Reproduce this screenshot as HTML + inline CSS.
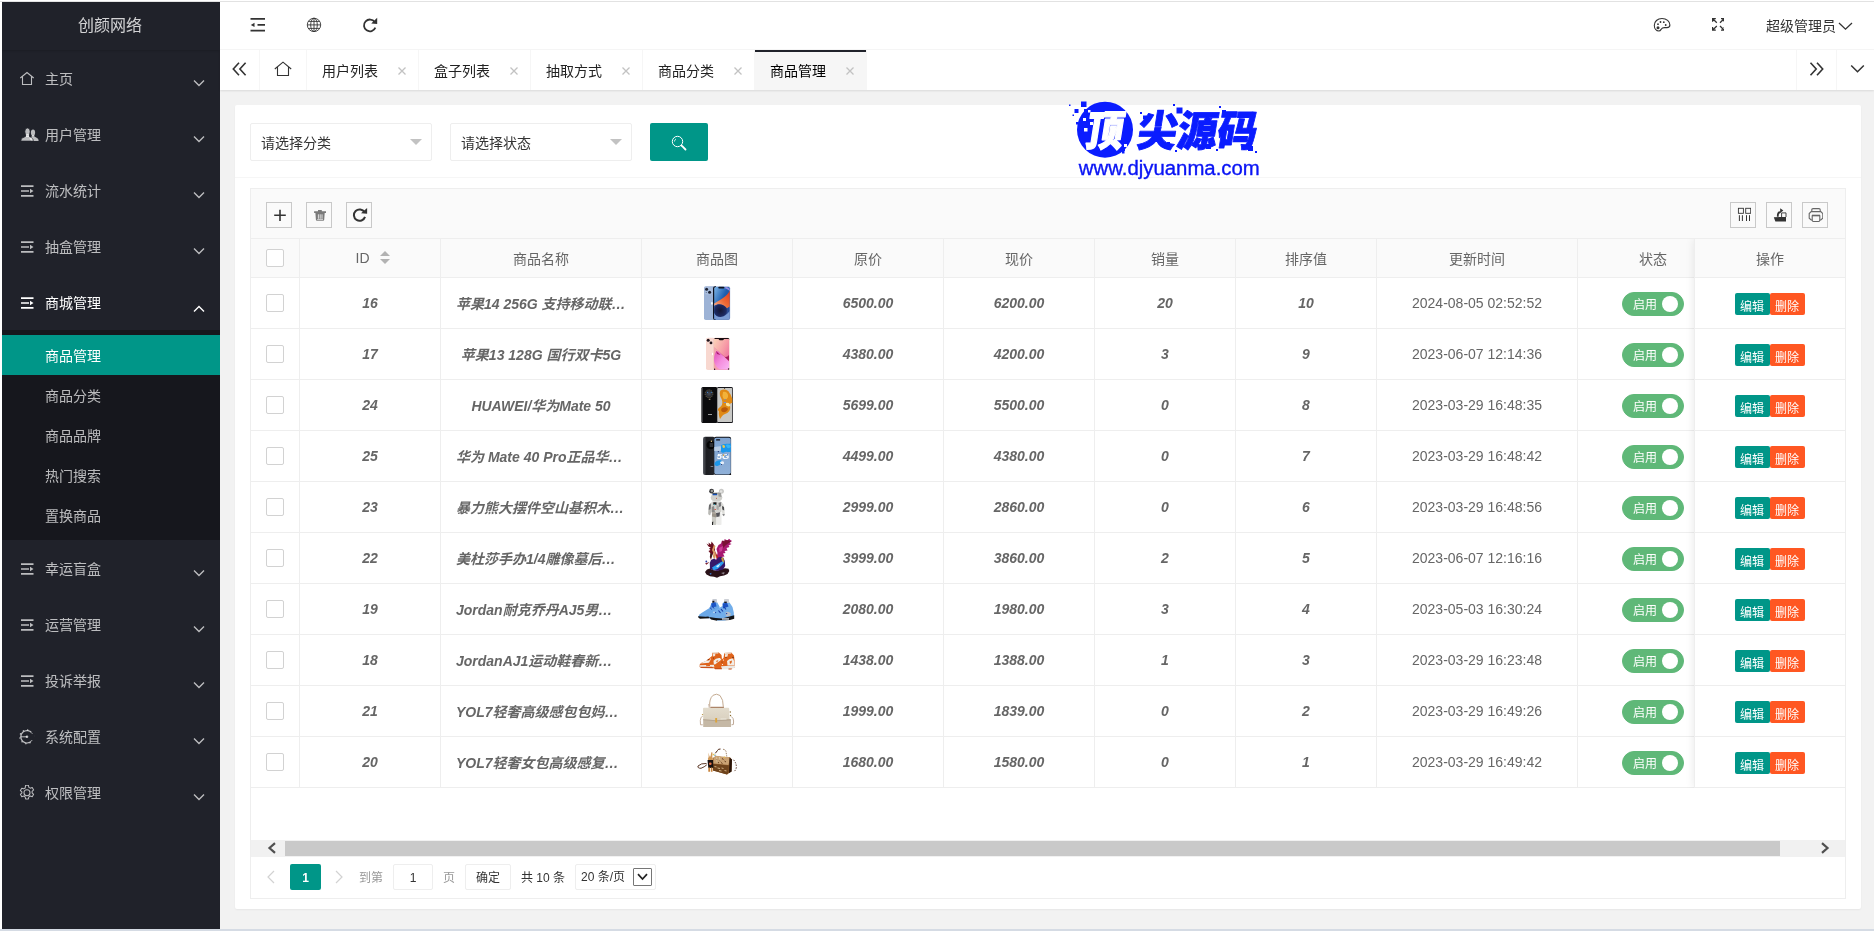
<!DOCTYPE html>
<html lang="zh-CN">
<head>
<meta charset="utf-8">
<title>商品管理</title>
<style>
*{box-sizing:border-box;margin:0;padding:0}
html,body{width:1874px;height:931px;overflow:hidden}
body{position:relative;background:#f2f2f2;font-family:"Liberation Sans","Noto Sans CJK SC",sans-serif;font-size:14px;color:#333;line-height:1}
.abs{position:absolute}
#wrap{position:absolute;left:0;top:0;width:1874px;height:931px;overflow:hidden;will-change:transform}
#side{position:absolute;left:0;top:0;width:220px;height:931px;background:#20222a}
#logo{position:absolute;left:0;top:0;width:220px;height:50px;line-height:52px;text-align:center;color:rgba(255,255,255,.8);font-size:16px;box-shadow:0 1px 2px rgba(0,0,0,.15)}
.mi{position:absolute;left:0;width:220px;height:56px;color:rgba(255,255,255,.7);font-size:14px}
.mi .t{position:absolute;left:45px;top:0;line-height:58px;white-space:nowrap}
.mi svg.ic{position:absolute;left:19px;top:21px;width:16px;height:16px}
.mi svg.ar{position:absolute;left:192px;top:28px;width:14px;height:10px}
#sub{position:absolute;left:0;top:330px;width:220px;height:210px;background:rgba(0,0,0,.3)}
.si{position:absolute;left:0;width:220px;height:40px;line-height:42px;padding-left:45px;color:rgba(255,255,255,.7);font-size:14px}
.si.on{background:#009688;color:#fff}
#hdr{position:absolute;left:220px;top:0;width:1654px;height:50px;background:#fff;border-bottom:1px solid #f6f6f6}
#tabs{position:absolute;left:220px;top:50px;width:1654px;height:40px;background:#fff;box-shadow:0 1px 2px 0 rgba(0,0,0,.1)}
.tab{position:absolute;top:0;height:40px;width:112px;border-right:1px solid #f6f6f6;line-height:42px;padding-left:15px;color:#222;font-size:14px;white-space:nowrap}
.tab .x{position:absolute;left:88px;top:13.500px;width:14px;height:14px}
.tab.on{background:#f6f6f6;color:#000}
.tab.on:before{content:"";position:absolute;left:0;top:0;width:100%;height:2px;background:#20222a}
.tctl{position:absolute;top:0;height:40px;width:40px}
#card{position:absolute;left:235px;top:105px;width:1626px;height:804px;background:#fff;border-radius:2px;box-shadow:0 1px 2px 0 rgba(0,0,0,.05)}
#chead{position:absolute;left:0;top:0;width:100%;height:73px;border-bottom:1px solid #f6f6f6}
.sel{position:absolute;top:18px;width:182px;height:38px;border:1px solid #eee;border-radius:2px;background:#fff;line-height:38px;padding-left:10px;color:#333;font-size:14px}
.sel:after{content:"";position:absolute;right:9px;top:15px;border:6px solid transparent;border-top-color:#c2c2c2;border-bottom-width:0}
#sbtn{position:absolute;left:415px;top:18px;width:58px;height:38px;background:#009688;border-radius:2px}
#tbox{position:absolute;left:15px;top:83px;width:1596px;height:711px;border:1px solid #eee;background:#fff;overflow:hidden}
#tool{position:absolute;left:0;top:0;width:1594px;height:50px;background:#fafafa;border-bottom:1px solid #eee}
.tb{position:absolute;top:13px;width:26px;height:26px;border:1px solid #c9c9c9;background:transparent}
.tb svg{position:absolute;left:5px;top:4px;width:16px;height:16px}
#thead{position:absolute;left:0;top:50px;width:1594px;height:39px;background:#fafafa;border-bottom:1px solid #eee}
.th{position:absolute;top:0;height:38px;line-height:40px;text-align:center;color:#666;font-size:14px;border-right:1px solid #eee}
.row{position:absolute;left:0;width:1594px;height:51px;border-bottom:1px solid #eee}
.td{position:absolute;top:0;height:50px;line-height:50px;text-align:center;color:#666;font-size:14px;font-weight:bold;font-style:italic;border-right:1px solid #eee;white-space:nowrap;overflow:hidden}
.td.n{font-weight:normal;font-style:normal}
.cb{position:absolute;left:15px;width:18px;height:18px;border:1px solid #d2d2d2;border-radius:2px;background:#fff}
.sw{position:absolute;left:1371px;top:14px;width:62px;height:24px;border-radius:12px;background:#5fb878;border:1px solid #5fb878}
.sw em{position:absolute;left:10px;top:0;line-height:24px;font-style:normal;font-weight:normal;font-size:12px;color:#fff}
.sw i{position:absolute;left:39px;top:3px;width:16px;height:16px;border-radius:50%;background:#fff}
#fix{position:absolute;left:1443px;top:50px;width:151px;height:549px;background:#fff;box-shadow:-1px 0 8px rgba(0,0,0,.08);border-left:1px solid #eee;clip-path:inset(0 0 0 -12px)}
.fh{position:absolute;left:0;top:0;width:150px;height:39px;line-height:40px;text-align:center;color:#666;background:#fafafa;border-bottom:1px solid #eee}
.fr{position:absolute;left:0;width:150px;height:51px;border-bottom:1px solid #eee}
.b1,.b2{position:absolute;top:15px;height:22px;width:35px;line-height:28px;overflow:hidden;font-size:12px;color:#fff;text-align:left;padding-left:5px;border-radius:2px}
.b1{left:40px;background:#009688}
.b2{left:75px;background:#ff5722}
#scr{position:absolute;left:0;top:651px;width:1594px;height:17px;background:#f1f1f1}
#scr .thumb{position:absolute;left:34px;top:1px;width:1495px;height:15px;background:#c9c9c9}
#page{position:absolute;left:0;top:668px;width:1594px;height:41px}
.pg{position:absolute;top:7px;height:26px;line-height:28px;font-size:12px;color:#333}
</style>
</head>
<body>
<div id="wrap">
<div id="side">
<div id="logo">创颜网络</div>
<div class="mi" style="top:50px"><svg class="ic" viewBox="0 0 16 16"><path d="M1.300 7 L8 1.500 L14.700 7 M3.500 5.400 V13.500 H12.500 V5.400" fill="none" stroke="currentColor" stroke-width="1.100"/></svg><span class="t">主页</span><svg class="ar" viewBox="0 0 14 10"><path d="M2 2.600 L7 7.500 L12 2.600" fill="none" stroke="currentColor" stroke-width="1.4"/></svg></div>
<div class="mi" style="top:106px"><svg class="ic" style="width:22px" viewBox="0 0 22 16"><g fill="currentColor"><ellipse cx="14" cy="5.600" rx="2.100" ry="3.200"/><path d="M12.800 8v1.300c0 .7-1.500 1-2.500 1.700l2 3.100h7.300c0-.8-.2-1.600-.6-2.300-.9-1.300-3.700-1.800-3.700-2.500V8z"/></g><g fill="currentColor" stroke="#20222a" stroke-width=".7"><path d="M6.900 7.500V9c0 .8-3.400 1.300-4.400 2.800-.5.800-.6 1.500-.6 2.300h12.400c0-.8-.1-1.500-.6-2.300-1-1.500-3.600-2-3.600-2.800V7.500z"/><ellipse cx="8.500" cy="4.700" rx="2.600" ry="3.700"/></g><path d="M7 7h3v3H7z" fill="currentColor"/></svg><span class="t">用户管理</span><svg class="ar" viewBox="0 0 14 10"><path d="M2 2.600 L7 7.500 L12 2.600" fill="none" stroke="currentColor" stroke-width="1.4"/></svg></div>
<div class="mi" style="top:162px"><svg class="ic" viewBox="0 0 16 16"><path d="M2 2.300h12.500v1.700H2zM2 7.200h8v1.600H2zM2 12h12.500v1.700H2zM11 5.800l3.500 2.200L11 10.200z" fill="currentColor"/></svg><span class="t">流水统计</span><svg class="ar" viewBox="0 0 14 10"><path d="M2 2.600 L7 7.500 L12 2.600" fill="none" stroke="currentColor" stroke-width="1.4"/></svg></div>
<div class="mi" style="top:218px"><svg class="ic" viewBox="0 0 16 16"><path d="M2 2.300h12.500v1.700H2zM2 7.200h8v1.600H2zM2 12h12.500v1.700H2zM11 5.800l3.500 2.200L11 10.200z" fill="currentColor"/></svg><span class="t">抽盒管理</span><svg class="ar" viewBox="0 0 14 10"><path d="M2 2.600 L7 7.500 L12 2.600" fill="none" stroke="currentColor" stroke-width="1.4"/></svg></div>
<div class="mi" style="top:274px;color:#fff"><svg class="ic" viewBox="0 0 16 16"><path d="M2 2.300h12.500v1.700H2zM2 7.200h8v1.600H2zM2 12h12.500v1.700H2zM11 5.800l3.500 2.200L11 10.200z" fill="currentColor"/></svg><span class="t">商城管理</span><svg class="ar" style="top:30px" viewBox="0 0 14 10"><path d="M2 7.500 L7 2.600 L12 7.500" fill="none" stroke="currentColor" stroke-width="1.4"/></svg></div>
<div class="mi" style="top:540px"><svg class="ic" viewBox="0 0 16 16"><path d="M2 2.300h12.500v1.700H2zM2 7.200h8v1.600H2zM2 12h12.500v1.700H2zM11 5.800l3.500 2.200L11 10.200z" fill="currentColor"/></svg><span class="t">幸运盲盒</span><svg class="ar" viewBox="0 0 14 10"><path d="M2 2.600 L7 7.500 L12 2.600" fill="none" stroke="currentColor" stroke-width="1.4"/></svg></div>
<div class="mi" style="top:596px"><svg class="ic" viewBox="0 0 16 16"><path d="M2 2.300h12.500v1.700H2zM2 7.200h8v1.600H2zM2 12h12.500v1.700H2zM11 5.800l3.500 2.200L11 10.200z" fill="currentColor"/></svg><span class="t">运营管理</span><svg class="ar" viewBox="0 0 14 10"><path d="M2 2.600 L7 7.500 L12 2.600" fill="none" stroke="currentColor" stroke-width="1.4"/></svg></div>
<div class="mi" style="top:652px"><svg class="ic" viewBox="0 0 16 16"><path d="M2 2.300h12.500v1.700H2zM2 7.200h8v1.600H2zM2 12h12.500v1.700H2zM11 5.800l3.500 2.200L11 10.200z" fill="currentColor"/></svg><span class="t">投诉举报</span><svg class="ar" viewBox="0 0 14 10"><path d="M2 2.600 L7 7.500 L12 2.600" fill="none" stroke="currentColor" stroke-width="1.4"/></svg></div>
<div class="mi" style="top:708px"><svg class="ic" viewBox="0 0 16 16"><path d="M13.300 4.600A6.200 6.200 0 1 0 13.300 11" fill="none" stroke="currentColor" stroke-width="1.200"/><circle cx="7.700" cy="7.800" r="6.900" fill="none" stroke="currentColor" stroke-width="1.200" stroke-dasharray="1.300 3.030" stroke-dashoffset="-2.300"/><path d="M12 2.300h3v11h-3z" fill="#20222a"/><path d="M13.300 4.600A6.200 6.200 0 0 0 12.200 3.400M13.300 11A6.200 6.200 0 0 1 12.200 12.200" fill="none" stroke="currentColor" stroke-width="1"/><circle cx="8" cy="7.800" r="1.300" fill="currentColor"/><path d="M1.800 7.800H8" stroke="currentColor" stroke-width="1"/></svg><span class="t">系统配置</span><svg class="ar" viewBox="0 0 14 10"><path d="M2 2.600 L7 7.500 L12 2.600" fill="none" stroke="currentColor" stroke-width="1.4"/></svg></div>
<div class="mi" style="top:764px"><svg class="ic" viewBox="0 0 16 16"><g transform="translate(8 7.800) scale(1.160) translate(-8 -8)"><circle cx="8" cy="8" r="2.600" fill="none" stroke="currentColor" stroke-width=".9"/><path d="M6.800 1.500h2.400l.4 1.800 1.200.7 1.700-.6 1.200 2.100-1.300 1.200v1.400l1.300 1.200-1.200 2.100-1.700-.6-1.200.7-.4 1.800H6.800l-.4-1.800-1.200-.7-1.700.6-1.200-2.100 1.300-1.200V7.300L2.300 6.100l1.200-2.100 1.700.6 1.200-.7z" fill="none" stroke="currentColor" stroke-width=".9" stroke-linejoin="round"/></g></svg><span class="t">权限管理</span><svg class="ar" viewBox="0 0 14 10"><path d="M2 2.600 L7 7.500 L12 2.600" fill="none" stroke="currentColor" stroke-width="1.4"/></svg></div>
<div id="sub">
<div class="si on" style="top:5px">商品管理</div>
<div class="si" style="top:45px">商品分类</div>
<div class="si" style="top:85px">商品品牌</div>
<div class="si" style="top:125px">热门搜索</div>
<div class="si" style="top:165px">置换商品</div>
</div>
</div>
<div id="hdr">
<svg class="abs" style="left:30px;top:17px;width:16px;height:16px" viewBox="0 0 16 16"><path d="M.5 1h14.500v1.800H.5zM7.500 7h7.500v1.800H7.500zM.5 12.800h14.500v1.800H.5zM4.500 5.700L.8 7.900l3.700 2.200z" fill="#333"/></svg>
<svg class="abs" style="left:86px;top:17px;width:16px;height:16px" viewBox="0 0 16 16"><g fill="none" stroke="#333" stroke-width=".9"><circle cx="8" cy="7.900" r="6.700"/><ellipse cx="8" cy="7.900" rx="3.300" ry="6.700"/><path d="M8 1.200v13.400M1.300 7.900h13.400M2.400 4.400h11.200M2.400 11.400h11.200"/></g></svg>
<svg class="abs" style="left:142px;top:17px;width:16px;height:16px" viewBox="0 0 16 16"><path d="M13.370 10.610A5.900 5.900 0 1 1 12.730 5.020" fill="none" stroke="#333" stroke-width="1.800"/><path d="M15.200 .8V7L9.200 6.400z" fill="#333"/></svg>
<svg class="abs" style="left:1433px;top:17px;width:18px;height:16px" viewBox="0 0 18 16"><path d="M9 1.500C4.500 1.500 1.300 4.600 1.300 8.300c0 3.200 2 5.700 4.600 5.700 1.400 0 1.800-.9 2.300-1.800.6-1.100 1.500-1.600 3.300-1.600h2.400c1.900 0 3-1 3-2.600C16.900 4.400 13.500 1.500 9 1.500z" fill="none" stroke="#333" stroke-width="1.100"/><circle cx="5" cy="10.700" r="1.500" fill="#333"/><circle cx="5" cy="7.200" r=".9" fill="#333"/><circle cx="7.500" cy="5" r=".9" fill="#333"/><circle cx="10.800" cy="5.200" r=".9" fill="#333"/><circle cx="12.700" cy="8" r=".9" fill="#333"/></svg>
<svg class="abs" style="left:1491.600px;top:18px;width:12.800px;height:12.800px" viewBox="0 0 12.800 12.800"><g fill="none" stroke="#333" stroke-width="1.250"><path d="M.6 3.800V.6H3.800M.8 .8l4 4M9 .6h3.200V3.800M12 .8l-4 4M.6 9V12.200H3.800M.8 12l4-4M12.200 9V12.200H9M12 12l-4-4"/></g></svg>
<div class="abs" style="left:1546px;top:0;line-height:52px;font-size:14px;color:#333;white-space:nowrap">超级管理员</div>
<svg class="abs" style="left:1618px;top:21px;width:15px;height:10px" viewBox="0 0 15 10"><path d="M1 2L7.500 8.200 14 2" fill="none" stroke="#333" stroke-width="1.300"/></svg>
</div>
<div id="tabs">
<div class="tctl" style="left:0;border-right:1px solid #f6f6f6"><svg class="abs" style="left:12px;top:12px;width:15px;height:14px" viewBox="0 0 15 14"><path d="M7 .8L1.300 7 7 13.200M13.600 .8L7.900 7l5.700 6.200" fill="none" stroke="#333" stroke-width="1.600"/></svg></div>
<div class="abs" style="left:40px;top:0;width:47px;height:40px;border-right:1px solid #f6f6f6"><svg class="abs" style="left:14px;top:11px;width:18px;height:16px" viewBox="0 0 18 16"><path d="M.8 8L9 1.200 17.200 8M3.500 6V14.500H14.500V6" fill="none" stroke="#333" stroke-width="1.100"/></svg></div>
<div class="tab" style="left:87px">用户列表<svg class="x" viewBox="0 0 14 14"><path d="M3.500 3.500l7 7M10.500 3.500l-7 7" stroke="#c2c2c2" stroke-width="1.300" fill="none"/></svg></div>
<div class="tab" style="left:199px">盒子列表<svg class="x" viewBox="0 0 14 14"><path d="M3.500 3.500l7 7M10.500 3.500l-7 7" stroke="#c2c2c2" stroke-width="1.300" fill="none"/></svg></div>
<div class="tab" style="left:311px">抽取方式<svg class="x" viewBox="0 0 14 14"><path d="M3.500 3.500l7 7M10.500 3.500l-7 7" stroke="#c2c2c2" stroke-width="1.300" fill="none"/></svg></div>
<div class="tab" style="left:423px">商品分类<svg class="x" viewBox="0 0 14 14"><path d="M3.500 3.500l7 7M10.500 3.500l-7 7" stroke="#c2c2c2" stroke-width="1.300" fill="none"/></svg></div>
<div class="tab on" style="left:535px">商品管理<svg class="x" viewBox="0 0 14 14"><path d="M3.500 3.500l7 7M10.500 3.500l-7 7" stroke="#c2c2c2" stroke-width="1.300" fill="none"/></svg></div>
<div class="tctl" style="left:1576px;border-left:1px solid #f6f6f6"><svg class="abs" style="left:12px;top:12px;width:15px;height:14px" viewBox="0 0 15 14"><path d="M1.500 .8L7.200 7l-5.700 6.200M8 .8L13.700 7 8 13.200" fill="none" stroke="#333" stroke-width="1.600"/></svg></div>
<div class="tctl" style="left:1616px;border-left:1px solid #f6f6f6"><svg class="abs" style="left:13px;top:14px;width:15px;height:10px" viewBox="0 0 15 10"><path d="M1.200 1.500L7.500 7.800 13.800 1.500" fill="none" stroke="#333" stroke-width="1.500"/></svg></div>
</div>
<div id="card">
<div id="chead">
<div class="sel" style="left:15px">请选择分类</div>
<div class="sel" style="left:215px">请选择状态</div>
<div id="sbtn"><svg class="abs" style="left:20px;top:11px;width:18px;height:18px" viewBox="0 0 18 18"><circle cx="7.500" cy="7.500" r="5.200" fill="none" stroke="#fff" stroke-width="1"/><path d="M11.700 11.700l3.800 3.800" stroke="#fff" stroke-width="1.800" stroke-linecap="round"/><path d="M4.500 7.500a3 3 0 0 1 1.500-2.600" fill="none" stroke="#fff" stroke-width=".8"/></svg></div>
</div>
<div id="tbox">
<div id="tool">
<div class="tb" style="left:15px"><svg viewBox="0 0 16 16"><path d="M8 2.700v11.200M2.200 8.300h11.600" stroke="#333" stroke-width="1.600"/></svg></div>
<div class="tb" style="left:55px"><svg viewBox="0 0 16 16"><path d="M2.100 4.200h11.900v1.700H2.100zM6 3.100h3.800v1.200H6zM3.400 6h9.300l-.5 6.800q-.1 1-1.100 1H5q-1 0-1.100-1z" fill="#7a7a7a"/><path d="M6.400 7.300v4.500M8.200 7.300v4.500M10 7.300v4.500" stroke="#fafafa" stroke-width=".8"/><path d="M5.200 12.600h5.800" stroke="#fafafa" stroke-width=".7"/></svg></div>
<div class="tb" style="left:95px"><svg viewBox="0 0 16 16"><path d="M13.020 9.860A5.700 5.700 0 1 1 12.540 5.250" fill="none" stroke="#333" stroke-width="2"/><path d="M15.100 1V6.800L9 6.300z" fill="#333"/></svg></div>
<div class="tb" style="left:1479px"><svg style="left:4px" viewBox="0 0 16 16"><g fill="none" stroke="#333"><rect x="3.400" y="1.300" width="5" height="5" stroke-width=".9"/><rect x="10.700" y="1.300" width="5" height="5" stroke-width=".9"/><path d="M4.400 8.200v5.800M7.400 8.200v5.800M11.500 8.200v5.800M14.500 8.200v5.800" stroke-width="1"/></g></svg></div>
<div class="tb" style="left:1515px"><svg style="left:4px" viewBox="0 0 16 16"><path d="M2.800 10.200L15 9.900V14.400H4.400z" fill="#333"/><path d="M10.600 10V5.900H15V10" fill="none" stroke="#333" stroke-width=".9"/><path d="M5.900 9.700C5.700 6.200 7 4.100 9.600 3.900V5.900C8.200 6.100 7.600 7.200 7.700 9.700z" fill="#333"/><path d="M9.200 1.200L12.300 3.500 9.200 5.900z" fill="#333"/></svg></div>
<div class="tb" style="left:1551px"><svg style="left:4px" viewBox="0 0 16 16"><g fill="none" stroke="#666" stroke-width="1.100"><path d="M4.800 4.600V2.800q0-1.200 1.200-1.200h6q1.200 0 1.200 1.200v1.800"/><path d="M4.200 4.600h9.600l2 2v4.600l-2 1.800H4.200l-2-1.800V6.600z"/><path d="M5.200 8.700h7.600v4.600q0 1.200-1.200 1.200H6.400q-1.200 0-1.200-1.200z" fill="#fafafa"/><path d="M5 8.400h8" stroke-width="1.400"/></g></svg></div>
</div>
<div id="thead">
<div class="th" style="left:0px;width:49px"><span class="cb" style="top:10px"></span></div>
<div class="th" style="left:49px;width:141px"><span style="position:absolute;left:55.500px;top:-1px">ID</span><span class="abs" style="left:80px;top:12px;border:5px solid transparent;border-top-width:0;border-bottom-color:#b2b2b2"></span><span class="abs" style="left:80px;top:20px;border:5px solid transparent;border-bottom-width:0;border-top-color:#b2b2b2"></span></div>
<div class="th" style="left:190px;width:201px">商品名称</div>
<div class="th" style="left:391px;width:151px">商品图</div>
<div class="th" style="left:542px;width:151px">原价</div>
<div class="th" style="left:693px;width:151px">现价</div>
<div class="th" style="left:844px;width:141px">销量</div>
<div class="th" style="left:985px;width:141px">排序值</div>
<div class="th" style="left:1126px;width:201px">更新时间</div>
<div class="th" style="left:1327px;width:151px">状态</div>
</div>
<div class="row" style="top:89px">
<div class="td" style="left:0;width:49px"><span class="cb" style="top:16px"></span></div><div class="td" style="left:49px;width:141px">16</div><div class="td" style="left:190px;width:201px;text-align:left;padding-left:15px;line-height:52px">苹果14 256G 支持移动联…</div><div class="td" style="left:391px;width:151px"><svg class="abs" style="left:0;top:0;width:151px;height:51px" viewBox="642 278 151 51"><defs><linearGradient id="a0" x1="0" y1="0" x2="1" y2="1"><stop offset="0" stop-color="#7fb6e8"/><stop offset=".45" stop-color="#1d5fb0"/><stop offset="1" stop-color="#2a3f86"/></linearGradient><linearGradient id="b0" x1="0" y1="1" x2="1" y2="0"><stop offset="0" stop-color="#f6b59a"/><stop offset=".5" stop-color="#ee6a35"/><stop offset="1" stop-color="#e23a1c"/></linearGradient><radialGradient id="c0" cx=".45" cy=".45" r=".6"><stop offset="0" stop-color="#141634"/><stop offset=".7" stop-color="#1d2a62"/><stop offset="1" stop-color="#3b62b4"/></radialGradient></defs><rect x="704" y="286.200" width="11" height="33.800" rx="1.800" fill="#9db3d6"/><rect x="704.600" y="287" width="8" height="7.600" rx="2" fill="#a9bddd"/><circle cx="706.600" cy="289.200" r="1.500" fill="#1a2030"/><circle cx="709.600" cy="292.200" r="1.500" fill="#1a2030"/><circle cx="706.300" cy="292.500" r=".6" fill="#5a6884"/><ellipse cx="711.900" cy="303.300" rx=".9" ry="1.500" fill="#f4f6fa"/><rect x="713" y="286.300" width="17.200" height="33.800" rx="2" fill="#a9bcdc"/><path d="M715 286.300 Q713 286.300 713 288.300 V318.100 Q713 320.100 715 320.100 H716 V286.300z" fill="#0e1220"/><rect x="714.200" y="287" width="15.500" height="32.600" rx="1.500" fill="url(#a0)"/><path d="M729.700 290.500 C727.500 296 722 298.500 714.200 303.500 V306 C718 303.500 723 304 726.500 308.500 L729.700 306.500z" fill="url(#b0)"/><path d="M714.200 306 C718 303 724.500 304 727.500 309 C729 313 727 317 722 318.200 C718 318.500 715 316 714.200 313z" fill="url(#c0)"/><path d="M714.200 313 C716 317.500 722 319 727.500 313.500 L729.700 311 V318.500 Q729.700 319.600 728.500 319.600 H715.500 Q714.200 319.600 714.200 318.500z" fill="#7a9bd4"/><path d="M726 287 C729 287.500 729.700 289 729.700 291 C728 289.500 726.500 288.500 724 288z" fill="#9a8ee6"/><rect x="718.300" y="286.800" width="6" height="1.700" rx=".8" fill="#0e1220"/></svg></div><div class="td" style="left:542px;width:151px">6500.00</div><div class="td" style="left:693px;width:151px">6200.00</div><div class="td" style="left:844px;width:141px">20</div><div class="td" style="left:985px;width:141px">10</div><div class="td n" style="left:1126px;width:201px">2024-08-05 02:52:52</div><div class="td" style="left:1327px;width:151px"></div><div class="sw"><em>启用</em><i></i></div>
</div>
<div class="row" style="top:140px">
<div class="td" style="left:0;width:49px"><span class="cb" style="top:16px"></span></div><div class="td" style="left:49px;width:141px">17</div><div class="td" style="left:190px;width:201px;line-height:52px">苹果13 128G 国行双卡5G</div><div class="td" style="left:391px;width:151px"><svg class="abs" style="left:0;top:0;width:151px;height:51px" viewBox="642 329 151 51"><defs><linearGradient id="a1" x1="0" y1="0" x2="1" y2="1"><stop offset="0" stop-color="#fbd3b8"/><stop offset=".5" stop-color="#f79aa6"/><stop offset="1" stop-color="#e4559a"/></linearGradient><linearGradient id="b1" x1="0" y1="0" x2="1" y2="1"><stop offset="0" stop-color="#e04fb4"/><stop offset=".5" stop-color="#f58ede"/><stop offset="1" stop-color="#f9b8f4"/></linearGradient></defs><rect x="706" y="337.800" width="9" height="32.200" rx="1.800" fill="#f8d8d0"/><circle cx="708.200" cy="340.300" r="1.500" fill="#20141a"/><circle cx="711" cy="342.900" r="1.400" fill="#20141a"/><ellipse cx="712.600" cy="354" rx=".7" ry="1.200" fill="#fff"/><rect x="713.300" y="337.800" width="16.200" height="32.300" rx="2" fill="#f2c3bd"/><rect x="714" y="338.600" width="15" height="31" rx="1.500" fill="url(#a1)"/><path d="M714 347 L729 361 V355 C727 358 724 357 722 355 L714 347z" fill="#a51a5c"/><path d="M714 347 L722 354.500 C719 352 716 352.500 714 355z" fill="#f4a6b0"/><path d="M716 351.500 C714.500 354 714 357 714 360 V368.500 Q714 369.600 715.200 369.600 H727.800 Q729 369.600 729 368.500 V361.500 L719.500 352.500 C718.500 351.300 717 350.800 716 351.500z" fill="url(#b1)"/><path d="M716 351 L720.500 355 L717 354z" fill="#a8186a"/><path d="M714 361 C715 366 718 369 721 369.600 H715.200 Q714 369.600 714 368.500z" fill="#f3a0aa"/><path d="M714.800 337.900 H728 Q729.500 338.200 729.400 339.600 L728.600 339 H724 Q723.500 340.200 722.500 340.200 H720 Q719 340.200 718.600 339 H714.400z" fill="#1a0e12"/><circle cx="714.600" cy="369.300" r=".7" fill="#1a0e12"/><circle cx="728.600" cy="369" r=".8" fill="#3a1420"/></svg></div><div class="td" style="left:542px;width:151px">4380.00</div><div class="td" style="left:693px;width:151px">4200.00</div><div class="td" style="left:844px;width:141px">3</div><div class="td" style="left:985px;width:141px">9</div><div class="td n" style="left:1126px;width:201px">2023-06-07 12:14:36</div><div class="td" style="left:1327px;width:151px"></div><div class="sw"><em>启用</em><i></i></div>
</div>
<div class="row" style="top:191px">
<div class="td" style="left:0;width:49px"><span class="cb" style="top:16px"></span></div><div class="td" style="left:49px;width:141px">24</div><div class="td" style="left:190px;width:201px;line-height:52px">HUAWEI/华为Mate 50</div><div class="td" style="left:391px;width:151px"><svg class="abs" style="left:0;top:0;width:151px;height:51px" viewBox="642 380 151 51"><defs><radialGradient id="a2" cx=".5" cy=".5" r=".5"><stop offset="0" stop-color="#4a4e58"/><stop offset=".7" stop-color="#2a2c32"/><stop offset="1" stop-color="#1a1b1f"/></radialGradient></defs><rect x="701.400" y="386.900" width="16" height="36" rx="1.500" fill="#0b0b0d"/><rect x="702" y="388" width="1" height="34" fill="#3a3a3e"/><circle cx="709" cy="393.800" r="4.200" fill="url(#a2)"/><circle cx="709" cy="393.800" r="3.900" fill="none" stroke="#a08a5a" stroke-width=".8" stroke-dasharray=".8 1.400"/><circle cx="707.600" cy="392.300" r=".6" fill="#3a86d8"/><circle cx="711.300" cy="392.300" r=".6" fill="#3a86d8"/><rect x="708.800" y="398.800" width="1.600" height=".9" fill="#c8b896"/><rect x="708" y="414" width="4" height="1" fill="#9a9a9a"/><rect x="716.800" y="386.900" width="16.200" height="36" rx="1.500" fill="#15151a"/><rect x="717.300" y="388" width="15" height="34" rx=".8" fill="#c9c9c6"/><path d="M720.500 390.500 C724 388.500 728.500 390 729.500 393 C731.500 395 731 397 732.300 398.500 V403 C730.500 402.500 729.500 404 730 406 C731 410 728.500 413 725 414 C722 415 721 418 720 419 C719 416 718.500 414 719 411.500 C717.500 410.500 717.500 408.500 719.500 407.500 C722 406 722.500 404 722.300 401.500 C722 398.500 720.500 398 720 395.500 C719.600 393.500 719.800 391.500 720.500 390.500z" fill="#e08a16"/><path d="M723 392 C725.500 391 727.500 392.500 728 395 C728.500 397.500 727 399 725.500 399.500 C723.500 399.500 722.500 397.500 722.500 395.500z" fill="#f2b23a"/><path d="M722 408 C724 406.500 727 407 728 409 C727.500 411.500 725 412.500 722.500 412 C720.800 411.500 720.800 409 722 408z" fill="#b85a0c"/><rect x="723.800" y="402" width="2.200" height="1" fill="#6a8fe0"/><circle cx="725.200" cy="399.500" r=".6" fill="#5a7fd8"/><path d="M726 403 C728.500 402 730.500 404 730 406 C728.500 407 726.500 406 726 405z" fill="#f6e2a0"/><circle cx="724.600" cy="388.300" r=".5" fill="#111"/></svg></div><div class="td" style="left:542px;width:151px">5699.00</div><div class="td" style="left:693px;width:151px">5500.00</div><div class="td" style="left:844px;width:141px">0</div><div class="td" style="left:985px;width:141px">8</div><div class="td n" style="left:1126px;width:201px">2023-03-29 16:48:35</div><div class="td" style="left:1327px;width:151px"></div><div class="sw"><em>启用</em><i></i></div>
</div>
<div class="row" style="top:242px">
<div class="td" style="left:0;width:49px"><span class="cb" style="top:16px"></span></div><div class="td" style="left:49px;width:141px">25</div><div class="td" style="left:190px;width:201px;text-align:left;padding-left:15px;line-height:52px">华为 Mate 40 Pro正品华…</div><div class="td" style="left:391px;width:151px"><svg class="abs" style="left:0;top:0;width:151px;height:51px" viewBox="642 431 151 51"><defs><linearGradient id="a3" x1="0" y1="0" x2="1" y2="0"><stop offset="0" stop-color="#5a5d64"/><stop offset=".3" stop-color="#1c1d21"/><stop offset="1" stop-color="#26272c"/></linearGradient><linearGradient id="b3" x1="0" y1="0" x2="0" y2="1"><stop offset="0" stop-color="#7fa4d2"/><stop offset="1" stop-color="#8fb0d8"/></linearGradient></defs><rect x="703" y="436.800" width="12" height="38.200" rx="2" fill="url(#a3)"/><circle cx="710.800" cy="445" r="4.300" fill="#050506"/><rect x="709.600" y="443" width="3.600" height="4" rx=".6" fill="#2e3036"/><circle cx="711.400" cy="441.300" r=".7" fill="#e9c98a"/><rect x="710.600" y="466" width="2.600" height=".9" fill="#8a8c92"/><rect x="714" y="436.800" width="17.100" height="38.200" rx="2" fill="#0f1014"/><rect x="714.300" y="437.800" width="16.500" height="36.600" rx="1.800" fill="url(#b3)"/><path d="M714.300 447 L722 446 L721 451 L714.300 451z" fill="#b9cde6"/><path d="M721 445.500 C723 443.500 727 444 730.800 443.500 V452 C728 452.500 726 451 724 452.500 C722 453.500 720.500 452 720.800 450 C721.500 448 720.500 447 721 445.500z" fill="#1c97ea"/><path d="M722.500 445 C724.500 444.500 725.500 446 724.800 447.500 C723.500 448.500 722 447.500 722.500 445z" fill="#f0c64a"/><path d="M726 445 C728.500 444 730.800 445 730.800 447 C729 449 726.500 448.500 726 445z" fill="#35b4f6"/><path d="M714.500 463.500 C715.500 460.500 719 460 721.500 460.500 C722 463 720.500 465 718 465.800 C716 466.500 714.500 465.500 714.500 463.500z" fill="#1c97ea"/><path d="M720 462 C722.500 460.500 724.500 461.500 724 463.500 C722.500 465 720.500 464.500 720 462z" fill="#e8eef8"/><circle cx="718.300" cy="451.600" r=".6" fill="#1a2c6a"/><circle cx="721.600" cy="464.500" r=".6" fill="#1a2c6a"/><rect x="717" y="453" width="12" height="6" fill="#fff" opacity=".0"/><text x="716.800" y="458.800" font-family="'Liberation Sans',sans-serif" font-size="7.500" font-weight="700" font-style="italic" fill="#fff" textLength="12.500" lengthAdjust="spacingAndGlyphs">5G</text><circle cx="723.600" cy="455.300" r=".8" fill="#e8a01c"/><circle cx="727.600" cy="454.600" r=".6" fill="#2a7ae0"/><rect x="716" y="439.300" width="4.200" height="1.300" rx=".65" fill="#0a0a10"/><circle cx="730.400" cy="474.300" r=".8" fill="#050508"/></svg></div><div class="td" style="left:542px;width:151px">4499.00</div><div class="td" style="left:693px;width:151px">4380.00</div><div class="td" style="left:844px;width:141px">0</div><div class="td" style="left:985px;width:141px">7</div><div class="td n" style="left:1126px;width:201px">2023-03-29 16:48:42</div><div class="td" style="left:1327px;width:151px"></div><div class="sw"><em>启用</em><i></i></div>
</div>
<div class="row" style="top:293px">
<div class="td" style="left:0;width:49px"><span class="cb" style="top:16px"></span></div><div class="td" style="left:49px;width:141px">23</div><div class="td" style="left:190px;width:201px;text-align:left;padding-left:15px;line-height:52px">暴力熊大摆件空山基积木…</div><div class="td" style="left:391px;width:151px"><svg class="abs" style="left:0;top:0;width:151px;height:51px" viewBox="642 482 151 51"><circle cx="711.600" cy="491.200" r="2.400" fill="#3c3c3e"/><circle cx="711.900" cy="491" r="1.200" fill="#9a9c9a"/><circle cx="721.400" cy="491.200" r="2.500" fill="#c9c9c7"/><circle cx="721" cy="491.400" r="1.200" fill="#e4e4e2"/><path d="M712.300 493.300 Q716.500 490.600 720.700 493.300 L722.300 497.500 Q722.300 501.400 716.500 501.400 Q710.700 501.400 710.700 497.500z" fill="#cfcfcb"/><path d="M718 492.500 L721 493 L721.500 497 L718.500 496.500z" fill="#9a9a98"/><rect x="712.600" y="493.600" width="4.600" height="1.700" rx=".5" fill="#1650b8"/><rect x="712.200" y="493.300" width="5.200" height=".6" fill="#222"/><circle cx="716.500" cy="498.200" r=".5" fill="#b04a30"/><rect x="711.600" y="501.600" width="9.800" height="11" rx="1.200" fill="#d2d2ce"/><path d="M711.600 507 L714 506 L715 512.600 H711.600z" fill="#8a8a88"/><path d="M716.500 505 L719 506 L718.500 510 L716.500 509.500z" fill="#a8a8a6"/><rect x="713.300" y="502.300" width="3.200" height="2.400" fill="#1b1b1d"/><circle cx="714.400" cy="504.600" r=".6" fill="#2ab0c8"/><rect x="714.600" y="509" width="1.300" height=".8" fill="#d83a2a"/><path d="M718.500 503 L721.400 502 V506 L719 507z" fill="#77777a"/><path d="M711.400 502.600 Q709 503.500 708.500 508 L708.200 513.500 Q708.600 515.600 710.300 515 L711.600 510z" fill="#b9b9b5"/><path d="M709 505 L711 504 L710.500 509 L708.800 510z" fill="#6a6a6c"/><path d="M721.400 502.600 Q723.800 503.500 724.200 508 L724.800 514 Q724.300 516.200 722.700 515.300 L721.600 510z" fill="#dededa"/><path d="M722 506 L724 507 L724.200 510.500 L722.300 509.500z" fill="#4a4a4c"/><path d="M722.300 514 L724.800 514 L724 516.300 L723 515.400z" fill="#88888a"/><rect x="711.900" y="512" width="4.500" height="13" rx=".8" fill="#cacac4"/><path d="M712 513.500 L716.400 513.500 L716.400 517.500 L712 516.500z" fill="#9a948a"/><rect x="717" y="512" width="4.500" height="13" rx=".8" fill="#ececea"/><path d="M716 513 L720 512.200 L719.500 516.500 L716.500 517z" fill="#55555a"/><rect x="712" y="512.400" width="3.600" height="1" fill="#9a8f84"/><path d="M712 522 L713.300 521.500 L713 525 L712 525z" fill="#222"/></svg></div><div class="td" style="left:542px;width:151px">2999.00</div><div class="td" style="left:693px;width:151px">2860.00</div><div class="td" style="left:844px;width:141px">0</div><div class="td" style="left:985px;width:141px">6</div><div class="td n" style="left:1126px;width:201px">2023-03-29 16:48:56</div><div class="td" style="left:1327px;width:151px"></div><div class="sw"><em>启用</em><i></i></div>
</div>
<div class="row" style="top:344px">
<div class="td" style="left:0;width:49px"><span class="cb" style="top:16px"></span></div><div class="td" style="left:49px;width:141px">22</div><div class="td" style="left:190px;width:201px;text-align:left;padding-left:15px;line-height:52px">美杜莎手办1/4雕像墓后…</div><div class="td" style="left:391px;width:151px"><svg class="abs" style="left:0;top:0;width:151px;height:51px" viewBox="642 533 151 51"><path d="M706.500 543.500 L709 545 L708.500 542.500 L711 544.500 L711.500 541.500 L713.500 544 L714.500 546 L715 550 L713.500 553 L712 556 L711 560 L709.800 557 L710.500 553.500 L708.500 551 L710.500 550 L709 548.500 L710.800 547.500 L708.500 546.500z" fill="#6a0f20"/><path d="M716 560.500 L717.500 553 L716.500 549 L718.500 545 L721 543.500 L722 540.500 L724.500 541.500 L724.500 539 L727.500 540.500 L729 538.800 L730.500 540 L732 541 L729.500 543 L731.500 544 L728.500 545.500 L729.500 547 L726.500 548 L727.500 550.500 L724.500 551 L725.500 553 L723 553.500 L724.500 556.500 L721.500 557 L720.500 560z" fill="#a81870"/><path d="M722 541 L728 540 L731 541.500 L726 545 L723 548z" fill="#6a0f20" opacity=".75"/><path d="M719 548 L723 546 L722 551 L719.500 552z" fill="#d44aa0" opacity=".8"/><path d="M713.800 545 L715.500 546 L714 550 L716 555 L715 559 L712.800 557 L713.500 553 L712 550z" fill="#d89a60"/><path d="M714.500 550 L717 555 L719 559 L716.500 558z" fill="#b02818"/><path d="M710.500 553 L712 554 L711.500 557.500 L710.300 557z" fill="#2a2420"/><path d="M705 563.500 L709.500 562 L706.500 564.800z" fill="#7a1a28"/><circle cx="706.300" cy="561.500" r=".9" fill="#2a3aa0"/><path d="M705 572 L707 569.500 L710 568.500 L713 570 L717 571 L721 569 L725 568.200 L728.500 568.800 L729.300 571 L727.500 574 L724 575.500 L720 576.300 L717 577.800 L714 576.800 L710 576.300 L706.500 574.500z" fill="#2a1218"/><path d="M710 569 L709.800 563 L711 560 L714 558.500 L716.500 560 L718 557.500 L721 556.800 L723.500 558 L724.800 561 L725.200 566 L723 569.500 L717 571 L713 570z" fill="#36186a"/><path d="M721.200 558 L723.200 557.200 L724.200 562 L722.600 563.500z" fill="#c9963a"/><path d="M712 567.500 L716 565 L720 562.500 L723 561.200 L723.800 563 L721 566 L717.500 569 L713.500 570.300z" fill="#2a9cf0"/><path d="M716 566.300 L720.500 563.500 L718 567.500z" fill="#d8f2ff"/><path d="M709.500 573.500 L711.500 572.800 L711 575z" fill="#3a7ad0"/><path d="M721 573 L724.500 572 L724 574.500z" fill="#8a8088"/></svg></div><div class="td" style="left:542px;width:151px">3999.00</div><div class="td" style="left:693px;width:151px">3860.00</div><div class="td" style="left:844px;width:141px">2</div><div class="td" style="left:985px;width:141px">5</div><div class="td n" style="left:1126px;width:201px">2023-06-07 12:16:16</div><div class="td" style="left:1327px;width:151px"></div><div class="sw"><em>启用</em><i></i></div>
</div>
<div class="row" style="top:395px">
<div class="td" style="left:0;width:49px"><span class="cb" style="top:16px"></span></div><div class="td" style="left:49px;width:141px">19</div><div class="td" style="left:190px;width:201px;text-align:left;padding-left:15px;line-height:52px">Jordan耐克乔丹AJ5男…</div><div class="td" style="left:391px;width:151px"><svg class="abs" style="left:0;top:0;width:151px;height:51px" viewBox="642 584 151 51"><path d="M698.500 616.500 Q698.800 614 701.500 613 L709.500 608 L711.500 603 Q713.500 601.500 717 602 L719.500 606.500 L719.800 612.500 L718.500 617.500 L708 618.200 L699 617.800z" fill="#6aa8e8"/><rect x="712.300" y="599" width="4.600" height="4" rx=".8" fill="#c6cad2"/><rect x="712.400" y="600.800" width="2" height="2" fill="#15161a"/><path d="M711.300 603.500 L715.500 602 L716.500 606.500 L711.500 607.500z" fill="#1c56c6"/><path d="M710.200 607.500 L711.500 609.500 M712.500 606.500 L714 608.500" stroke="#1a3fa8" stroke-width="1"/><path d="M709 617.500 Q710.500 612 716.500 609.500 L722.500 606 L723 602.500 Q726 601.500 729.500 602.500 L732.500 607 L733.800 612.500 L734 618 L722 619.500 L710 618.800z" fill="#72aeea"/><rect x="724" y="599" width="5" height="4" rx=".8" fill="#cdd0d6"/><rect x="724.200" y="601.600" width="2.600" height="1.400" fill="#1a1c22"/><path d="M722.600 603.500 L727 602.800 L728.500 606.500 L723 608.500z" fill="#1a50c0"/><path d="M721 609 L723 611.500 M718.500 610.500 L720.500 613 M724 607 L726 609.500" stroke="#173aa6" stroke-width="1.100"/><circle cx="714" cy="612.300" r=".7" fill="#e8eef6"/><circle cx="715.600" cy="612.600" r=".6" fill="#1a3aa0"/><path d="M725.500 612.500 Q728.500 610.500 731 613.500 L730 616.500 L726 616z" fill="#b8bec8"/><circle cx="726.600" cy="613.600" r=".7" fill="#1a3aa0"/><path d="M698 616.300 Q703 616.800 708.500 616.600 L709.500 618.200 L700 618.800 Q698 618.200 698 616.300z" fill="#121214"/><path d="M709 617 Q716 618.300 722 618.600 L734.200 615.300 L734.200 618.800 L730 620 L717 620.800 L711 619.600z" fill="#141416"/><rect x="722" y="618.300" width="7" height="1.300" fill="#dfe6ee"/><rect x="717" y="620" width="8.500" height=".8" fill="#9ec4ea"/></svg></div><div class="td" style="left:542px;width:151px">2080.00</div><div class="td" style="left:693px;width:151px">1980.00</div><div class="td" style="left:844px;width:141px">3</div><div class="td" style="left:985px;width:141px">4</div><div class="td n" style="left:1126px;width:201px">2023-05-03 16:30:24</div><div class="td" style="left:1327px;width:151px"></div><div class="sw"><em>启用</em><i></i></div>
</div>
<div class="row" style="top:446px">
<div class="td" style="left:0;width:49px"><span class="cb" style="top:16px"></span></div><div class="td" style="left:49px;width:141px">18</div><div class="td" style="left:190px;width:201px;text-align:left;padding-left:15px;line-height:52px">JordanAJ1运动鞋春新…</div><div class="td" style="left:391px;width:151px"><svg class="abs" style="left:0;top:0;width:151px;height:51px" viewBox="642 635 151 51"><path d="M699.300 666.500 Q699.300 664 701 663 L706 661 L709 658.500 L712 656 L712.300 652.800 L718.500 652.300 L721.500 655 L722 660 L722.500 666 L714 667.800 L700 667z" fill="#de621a"/><path d="M712.600 652.300 H718.500 L718.300 653.600 H712.600z" fill="#efece6"/><path d="M700.500 663.600 L709 662.800 L710.500 660 L705.500 661z" fill="#f1eee8"/><path d="M712.800 653.800 L715.500 653.600 L715 656 L712.800 656.500z" fill="#efe6dc"/><path d="M713.500 660.800 Q716 657.500 720 658 L721.800 660.500 L722 663.800 L713.800 664.300z" fill="#f1eee8"/><path d="M716 661 L718.500 660 L717 662.500z" fill="#de621a"/><path d="M699.300 665.200 L722 664.500 L722.300 666.500 L699.600 667.500z" fill="#f1eee8"/><path d="M699.500 666.800 H712 L714 668.200 L701 668z" fill="#c8501a"/><path d="M706 665.300 L710 664.800 L710 666 L706 666.300z M714 665 L718 664.800 L718 666.300 L714 666.300z" fill="#de621a"/><path d="M714 667.500 Q715 663.500 719 661.500 L723.500 658 L724.300 653 L731 652.300 L734 655.500 L734.600 661 L735 667.500 L728 669 L715 668.500z" fill="#e0641c"/><path d="M724.600 652.600 L731 652.200 L731.300 653.600 L724.600 653.900z" fill="#efece6"/><path d="M727 661 Q729.500 657.800 733 658.600 L734.300 661.500 L734.600 665.200 L727.500 665.500z" fill="#f1eee8"/><path d="M725 654.300 L728 654 L727.500 656.500 L725 657z" fill="#efe6dc"/><path d="M729.500 661.500 L732 660.500 L731.500 663 L730 664z" fill="#de621a"/><path d="M721 666.200 L735 665.500 L735.200 667.600 L731 669.200 L722 669.300z" fill="#ebe8e4"/><path d="M714 668 H721.500 L722 669.300 L715 669.200z M728.500 668.600 H732 L731.500 669.600 H728.500z" fill="#c8501a"/><circle cx="708.300" cy="659.600" r=".7" fill="#7a2a0a"/><circle cx="713.500" cy="658" r=".6" fill="#7a2a0a"/><circle cx="722" cy="662" r=".6" fill="#7a2a0a"/><circle cx="726" cy="657.500" r=".6" fill="#7a2a0a"/><circle cx="733" cy="657.500" r=".7" fill="#5a2a10"/><circle cx="710.500" cy="659" r=".6" fill="#fff"/><circle cx="723.500" cy="660" r=".6" fill="#fff"/><circle cx="722.500" cy="664.500" r=".6" fill="#fff"/></svg></div><div class="td" style="left:542px;width:151px">1438.00</div><div class="td" style="left:693px;width:151px">1388.00</div><div class="td" style="left:844px;width:141px">1</div><div class="td" style="left:985px;width:141px">3</div><div class="td n" style="left:1126px;width:201px">2023-03-29 16:23:48</div><div class="td" style="left:1327px;width:151px"></div><div class="sw"><em>启用</em><i></i></div>
</div>
<div class="row" style="top:497px">
<div class="td" style="left:0;width:49px"><span class="cb" style="top:16px"></span></div><div class="td" style="left:49px;width:141px">21</div><div class="td" style="left:190px;width:201px;text-align:left;padding-left:15px;line-height:52px">YOL7轻奢高级感包包妈…</div><div class="td" style="left:391px;width:151px"><svg class="abs" style="left:0;top:0;width:151px;height:51px" viewBox="642 686 151 51"><defs><linearGradient id="a8" x1="0" y1="0" x2="0" y2="1"><stop offset="0" stop-color="#e3dccd"/><stop offset="1" stop-color="#d9d0bf"/></linearGradient></defs><path d="M709.800 706.500 Q709 699 713 695.300 Q716.500 693 720 695.500 Q723.500 699.500 723.300 706.800" fill="none" stroke="#c4ab92" stroke-width="1"/><path d="M708.800 704 L709.800 712 L709.600 716.500" fill="none" stroke="#c9b4a2" stroke-width="1.100"/><rect x="710.300" y="706.800" width="13.600" height="1.400" fill="#9a6848"/><rect x="703.200" y="719" width="27.800" height="8" fill="#c5b8a5"/><path d="M703 708.500 Q703 707.800 704 707.800 H728.300 Q729.200 707.800 729.200 708.800 L729.600 719.300 L716 720.300 L703.200 719.300z" fill="url(#a8)"/><path d="M703.200 719.300 L716 720.300 L729.600 719.300 L731 720.500 L716 721.300 L703.200 720.300z" fill="#b5a692"/><rect x="715.200" y="718" width="1.900" height="4.600" rx=".3" fill="#dba43c"/><path d="M702.600 716 Q700.300 717.500 700.300 720.500 L700.500 724.800 L702.800 724.800" fill="none" stroke="#c6b09c" stroke-width="1"/><path d="M731.300 716.500 Q733.600 718 733.600 721 L733.400 724.500 L731.500 724.800" fill="none" stroke="#c0aa98" stroke-width="1"/><circle cx="702.500" cy="714.600" r=".7" fill="#b8923a"/><circle cx="730.300" cy="712" r=".7" fill="#8a6a2a"/><circle cx="730.500" cy="715.500" r=".7" fill="#8a6a2a"/><rect x="720.500" y="718.600" width="6" height=".8" fill="#f3efe6"/></svg></div><div class="td" style="left:542px;width:151px">1999.00</div><div class="td" style="left:693px;width:151px">1839.00</div><div class="td" style="left:844px;width:141px">0</div><div class="td" style="left:985px;width:141px">2</div><div class="td n" style="left:1126px;width:201px">2023-03-29 16:49:26</div><div class="td" style="left:1327px;width:151px"></div><div class="sw"><em>启用</em><i></i></div>
</div>
<div class="row" style="top:548px">
<div class="td" style="left:0;width:49px"><span class="cb" style="top:16px"></span></div><div class="td" style="left:49px;width:141px">20</div><div class="td" style="left:190px;width:201px;text-align:left;padding-left:15px;line-height:52px">YOL7轻奢女包高级感复…</div><div class="td" style="left:391px;width:151px"><svg class="abs" style="left:0;top:0;width:151px;height:51px" viewBox="642 737 151 51"><path d="M715.300 753.300 L717.500 750.500 L718.500 749.300 L720.500 749" fill="none" stroke="#4a2210" stroke-width="1"/><path d="M723 749.300 Q725.500 749.500 726 751.500 L726.800 756.500" fill="none" stroke="#8a6a4a" stroke-width=".8" stroke-dasharray="1.500 1"/><path d="M713 758 L716 756 L722 757 L730 757.300 L731.800 759.500 L731.500 771.500 L727 774.500 L713 770.500z" fill="#8a5828"/><path d="M713.500 757.500 L716 755.800 L722 756.500 L730 757.200 L728.500 765 L713.300 763.500z" fill="#caa274"/><path d="M716 759 l1.500 1 M719 760 l1.500 1 M722 758.500 l1.500 1 M724.500 761 l1.500 1 M721 762.500 l1.500 1 M717.500 762 l1.500 1" stroke="#5a3414" stroke-width=".9"/><path d="M729.500 757.500 L732 759.500 L731.600 771.500 L729 773z" fill="#2a1408"/><path d="M713 764 L728.800 765.500 L728.500 772.500 L727 774.500 L713 770.500z" fill="#6e431c"/><path d="M714.500 766.500 l2 .4 M717.500 768 l2.500 .5 M721.500 768 l2 .5 M724.500 770.500 l2 .4 M719 770.500 l2.500 .5" stroke="#d8b98c" stroke-width=".9"/><path d="M708.600 752.500 L709.500 756.500 L710.500 756.500 L711.300 752.300 L712.500 752.500 L712.300 757 Q713.500 758.500 712.800 760.500 L708.300 760.500 Q707.300 758.500 708.600 757z" fill="#d09858"/><circle cx="713.500" cy="754.600" r=".8" fill="#e8c84a"/><circle cx="715" cy="755.300" r=".7" fill="#4a8a9a"/><path d="M707.500 760 L713 760 L713.300 768 L708.300 768z" fill="#1a1210"/><circle cx="710.300" cy="763.800" r="1.300" fill="#e8744a"/><path d="M708.300 767.500 L710 767.500 L710 771.800 L708.300 771.800z M710.800 767.500 L712.500 767.500 L712.500 771.800 L710.800 771.800z" fill="#c8843c"/><path d="M706.500 763.500 Q701 763 698 766 Q697.300 768.300 701 768.300 Q704.500 767 706.800 764.800" fill="none" stroke="#4a2210" stroke-width=".9"/><path d="M733.500 759.800 Q736.800 763.500 736.300 768 Q735.500 770.500 733.800 771.800" fill="none" stroke="#4a2618" stroke-width=".9" stroke-dasharray="1.500 1.200"/><path d="M716.500 757.500 L717.300 762.500 M719.500 757 L720 761" stroke="#e0d0b0" stroke-width="1" opacity=".8"/><circle cx="724.500" cy="757.200" r=".8" fill="#e8c050"/></svg></div><div class="td" style="left:542px;width:151px">1680.00</div><div class="td" style="left:693px;width:151px">1580.00</div><div class="td" style="left:844px;width:141px">0</div><div class="td" style="left:985px;width:141px">1</div><div class="td n" style="left:1126px;width:201px">2023-03-29 16:49:42</div><div class="td" style="left:1327px;width:151px"></div><div class="sw"><em>启用</em><i></i></div>
</div>
<div id="fix">
<div class="fh">操作</div>
<div class="fr" style="top:39px"><span class="b1">编辑</span><span class="b2">删除</span></div>
<div class="fr" style="top:90px"><span class="b1">编辑</span><span class="b2">删除</span></div>
<div class="fr" style="top:141px"><span class="b1">编辑</span><span class="b2">删除</span></div>
<div class="fr" style="top:192px"><span class="b1">编辑</span><span class="b2">删除</span></div>
<div class="fr" style="top:243px"><span class="b1">编辑</span><span class="b2">删除</span></div>
<div class="fr" style="top:294px"><span class="b1">编辑</span><span class="b2">删除</span></div>
<div class="fr" style="top:345px"><span class="b1">编辑</span><span class="b2">删除</span></div>
<div class="fr" style="top:396px"><span class="b1">编辑</span><span class="b2">删除</span></div>
<div class="fr" style="top:447px"><span class="b1">编辑</span><span class="b2">删除</span></div>
<div class="fr" style="top:498px"><span class="b1">编辑</span><span class="b2">删除</span></div>
</div>
<div id="scr"><div class="thumb"></div><svg class="abs" style="left:15px;top:2px;width:12px;height:12px" viewBox="0 0 12 12"><path d="M9 1.200L3.500 6 9 10.800" fill="none" stroke="#505050" stroke-width="2.200"/></svg><svg class="abs" style="left:1568px;top:2px;width:12px;height:12px" viewBox="0 0 12 12"><path d="M3 1.200L8.500 6 3 10.800" fill="none" stroke="#505050" stroke-width="2.200"/></svg></div>
<div id="page">
<svg class="abs" style="left:15px;top:13px;width:10px;height:14px" viewBox="0 0 10 14"><path d="M8 1L2 7l6 6" fill="none" stroke="#d2d2d2" stroke-width="1.200"/></svg>
<div class="pg" style="left:39px;width:31px;background:#009688;color:#fff;text-align:center;border-radius:2px;font-weight:bold">1</div>
<svg class="abs" style="left:83px;top:13px;width:10px;height:14px" viewBox="0 0 10 14"><path d="M2 1l6 6-6 6" fill="none" stroke="#d2d2d2" stroke-width="1.200"/></svg>
<div class="pg" style="left:108px;color:#999">到第</div>
<div class="pg" style="left:142px;width:40px;border:1px solid #eee;border-radius:2px;text-align:center;line-height:26px">1</div>
<div class="pg" style="left:192px;color:#999">页</div>
<div class="pg" style="left:214px;width:46px;border:1px solid #eee;border-radius:2px;text-align:center;line-height:26px">确定</div>
<div class="pg" style="left:270px">共 10 条</div>
<div class="pg" style="left:324px;width:81px;border:1px solid #eee;border-radius:2px;line-height:25px;padding-left:5px">20 条/页<span class="abs" style="left:57px;top:3px;width:19px;height:18px;border:1px solid #767676;border-radius:1px;background:#fff"><svg class="abs" style="left:3px;top:4px;width:11px;height:8px" viewBox="0 0 11 8"><path d="M1 1.200l4.500 4.800L10 1.200" fill="none" stroke="#222" stroke-width="1.700"/></svg></span></div>
</div>
</div>
</div>
<svg id="lg" class="abs" style="left:1060px;top:95px;width:210px;height:92px;overflow:visible" viewBox="0 0 210 92">
<circle cx="45" cy="34.7" r="28" fill="#0a1cff"/>
<rect x="21" y="6.5" width="5.5" height="5.5" fill="#0a1cff"/>
<rect x="14.5" y="14" width="4" height="4" fill="#0a1cff"/>
<rect x="9" y="9.5" width="1.5" height="1.5" fill="#0a1cff"/>
<rect x="12.5" y="19.5" width="1.5" height="1.5" fill="#0a1cff"/>
<rect x="16" y="27" width="2.5" height="2.5" fill="#0a1cff"/>
<rect x="24" y="14" width="3" height="3" fill="#0a1cff"/>
<rect x="113" y="9" width="2" height="2" fill="#0a1cff"/>
<rect x="116.5" y="12.5" width="6" height="6" fill="#0a1cff"/>
<rect x="159" y="11" width="2" height="2" fill="#0a1cff"/>
<rect x="162" y="15" width="4" height="4" fill="#0a1cff"/>
<rect x="80" y="17" width="2" height="2" fill="#0a1cff"/>
<rect x="83" y="20.5" width="4" height="4" fill="#0a1cff"/>
<rect x="146" y="49" width="5" height="5" fill="#0a1cff"/>
<rect x="156" y="54" width="2" height="2" fill="#0a1cff"/>
<rect x="188" y="51" width="5" height="5" fill="#0a1cff"/>
<rect x="195" y="56" width="2" height="2" fill="#0a1cff"/>
<rect x="115" y="55" width="2" height="2" fill="#0a1cff"/>
<rect x="107" y="47" width="3" height="3" fill="#0a1cff"/>
<rect x="60" y="51" width="5" height="5" fill="#0a1cff"/>
<rect x="62" y="56" width="2.5" height="2.5" fill="#0a1cff"/>
<rect x="23" y="23" width="3" height="3" fill="#fff"/>
<rect x="28" y="15" width="2.5" height="2.5" fill="#fff"/>
<rect x="30" y="27" width="3" height="3" fill="#fff"/>
<rect x="24" y="33" width="3.5" height="3.5" fill="#fff"/>
<rect x="33" y="20" width="2" height="2" fill="#fff"/>
<rect x="64" y="49" width="3" height="3" fill="#fff"/>
<g transform="translate(24.5 51.3) skewX(-9)"><text x="0" y="0" font-family="'Liberation Sans','Noto Sans CJK SC',sans-serif" font-size="42" font-weight="900" fill="#fff" stroke="#fff" stroke-width="1.300" stroke-linejoin="round" textLength="37" lengthAdjust="spacingAndGlyphs">顶</text></g>
<g transform="translate(75.5 51.3) skewX(-9)"><text x="0" y="0" font-family="'Liberation Sans','Noto Sans CJK SC',sans-serif" font-size="42" font-weight="900" fill="#0a1cff" stroke="#0a1cff" stroke-width=".9" stroke-linejoin="round" textLength="120" lengthAdjust="spacingAndGlyphs">尖源码</text></g>
<text x="18.8" y="79.5" font-family="'Liberation Sans',sans-serif" font-size="19.5" fill="#0a14f5" stroke="#0a14f5" stroke-width=".35" textLength="181" lengthAdjust="spacingAndGlyphs">www.djyuanma.com</text>
</svg>
<div class="abs" style="left:0;top:0;width:2px;height:931px;background:#fff"></div>
<div class="abs" style="left:0;top:0;width:1874px;height:2px;background:#fff;border-bottom:1px solid #e2e2e2"></div>
<div class="abs" style="left:0;top:929px;width:1874px;height:2px;background:#d5dbe4"></div>
</div>
</body>
</html>
